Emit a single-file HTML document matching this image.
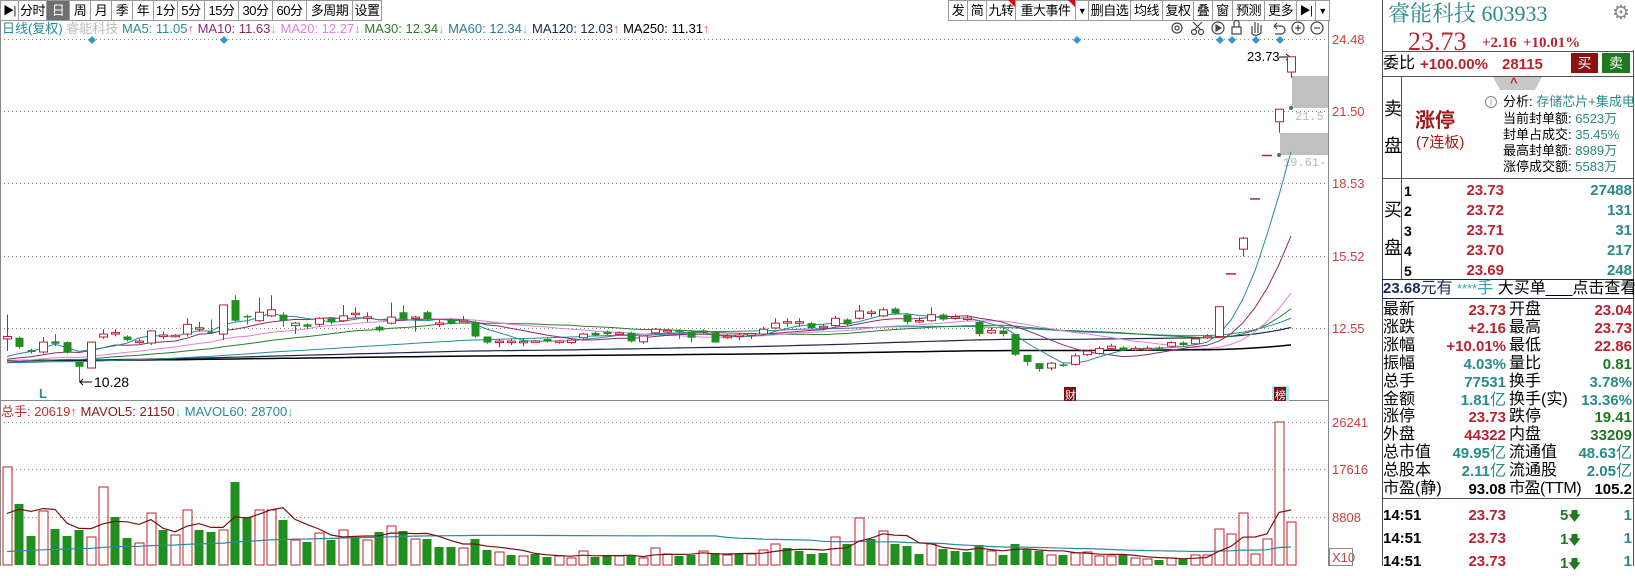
<!DOCTYPE html>
<html><head><meta charset="utf-8">
<style>
*{box-sizing:border-box}
body{margin:0;width:1635px;height:566px;position:relative;overflow:hidden;background:#fff;font-family:"Liberation Sans","Noto Sans CJK SC",sans-serif;color:#000}
.a{position:absolute;white-space:nowrap}
.tb{position:absolute;top:0;height:21px;font-size:13px;line-height:20px;text-align:center;border:1px solid #9a9a9a;border-left:none;background:#fff;white-space:nowrap;overflow:hidden;letter-spacing:-0.5px}
.rp .a{line-height:1}
.red{color:#b8232f}.teal{color:#2a8a8a}.grn{color:#1f7a1f}
</style></head><body>

<!-- left toolbar -->
<div class="tb" style="left:0;width:19px;border-left:1px solid #9a9a9a;font-size:11px">▶|</div>
<div class="tb" style="left:19px;width:28px">分时</div>
<div class="tb" style="left:47px;width:23px;background:#6f6f6f;color:#fff">日</div>
<div class="tb" style="left:70px;width:21px">周</div>
<div class="tb" style="left:91px;width:21px">月</div>
<div class="tb" style="left:112px;width:21px">季</div>
<div class="tb" style="left:133px;width:21px">年</div>
<div class="tb" style="left:154px;width:24px">1分</div>
<div class="tb" style="left:178px;width:27px">5分</div>
<div class="tb" style="left:205px;width:34px">15分</div>
<div class="tb" style="left:239px;width:34px">30分</div>
<div class="tb" style="left:273px;width:34px">60分</div>
<div class="tb" style="left:307px;width:46px">多周期</div>
<div class="tb" style="left:353px;width:29px">设置</div>

<!-- right toolbar -->
<div class="tb" style="left:948px;width:20px;border-left:1px solid #9a9a9a">发</div>
<div class="tb" style="left:968px;width:19px">简</div>
<div class="tb" style="left:987px;width:29px">九转</div>
<div class="tb" style="left:1016px;width:60px">重大事件</div>
<div class="tb" style="left:1076px;width:13px;font-size:9px">▼</div>
<div class="tb" style="left:1089px;width:42px">删自选</div>
<div class="tb" style="left:1131px;width:32px">均线</div>
<div class="tb" style="left:1163px;width:31px">复权</div>
<div class="tb" style="left:1194px;width:19px">叠</div>
<div class="tb" style="left:1213px;width:20px">窗</div>
<div class="tb" style="left:1233px;width:32px">预测</div>
<div class="tb" style="left:1265px;width:32px">更多</div>
<div class="tb" style="left:1297px;width:19px;font-size:11px">▶|</div>
<div class="tb" style="left:1316px;width:14px;font-size:9px">▼</div>
<div class="a" style="left:1008px;top:0;width:0;height:0;border-top:7px solid #d01010;border-left:7px solid transparent"></div>
<div class="a" style="left:1068px;top:0;width:0;height:0;border-top:7px solid #d01010;border-left:7px solid transparent"></div>

<!-- MA legend -->
<div class="a" style="left:2px;top:21px;font-size:13px;line-height:16px">
<span style="color:#2a8a9a">日线(复权)</span> <span style="color:#bbb">睿能科技</span> <span style="color:#2a8a9a">MA5: 11.05<span style="color:#e06060">↑</span></span> <span style="color:#8b2a6b">MA10: 11.63<span style="color:#5cc">↓</span></span> <span style="color:#e080e0">MA20: 12.27<span style="color:#5cc">↓</span></span> <span style="color:#2a7a2a">MA30: 12.34<span style="color:#5cc">↓</span></span> <span style="color:#2a7a9a">MA60: 12.34<span style="color:#5cc">↓</span></span> <span style="color:#1a2a4a">MA120: 12.03<span style="color:#e06060">↑</span></span> <span style="color:#000">MA250: 11.31<span style="color:#e06060">↑</span></span>
</div>

<svg id="c" class="a" style="left:0;top:0" width="1382" height="566" xmlns="http://www.w3.org/2000/svg">
<g fill="none" stroke="#444" stroke-width="1.2">
<circle cx="1177" cy="28" r="5"/><circle cx="1177" cy="28" r="2"/>
<circle cx="1194" cy="32" r="2.5"/><circle cx="1201" cy="32" r="2.5"/><path d="M1193 22 L1201 30 M1202 22 L1194 30"/>
<circle cx="1218" cy="28" r="6"/><path d="M1216 25 L1221 28 L1216 31Z" fill="#444"/>
<rect x="1232" y="27" width="9" height="7"/><path d="M1234 27 V23 a2.5 2.5 0 0 1 5 0 V27"/>
<path d="M1252 34 V26 M1255 33 V22 M1258 33 V23 M1261 33 V25 M1252 34 Q1256 37 1261 33"/>
<path d="M1274 26 h7 a4 4 0 0 1 0 8 h-6 M1274 26 l3 -3 M1274 26 l3 3"/>
<circle cx="1298" cy="28" r="6"/><path d="M1295 28 h6 M1298 25 v6"/>
<circle cx="1317" cy="28" r="6"/><path d="M1314 28 h6"/>
</g>
<line x1="0.5" y1="21" x2="0.5" y2="566" stroke="#888"/>
<line x1="1328.5" y1="21" x2="1328.5" y2="566" stroke="#888"/>
<line x1="0" y1="400.5" x2="1328" y2="400.5" stroke="#888"/>
<g stroke="#888" stroke-dasharray="1,3">
<line x1="0" y1="39.5" x2="1328" y2="39.5"/><line x1="0" y1="111.5" x2="1328" y2="111.5"/>
<line x1="0" y1="183.5" x2="1328" y2="183.5"/><line x1="0" y1="256.5" x2="1328" y2="256.5"/>
<line x1="0" y1="328.5" x2="1328" y2="328.5"/>
<line x1="0" y1="422.5" x2="1328" y2="422.5"/><line x1="0" y1="469.5" x2="1328" y2="469.5"/>
<line x1="0" y1="517.5" x2="1328" y2="517.5"/>
</g>
<g font-family="Liberation Sans" font-size="13" fill="#c84040">
<text x="1332" y="44">24.48</text><text x="1332" y="116">21.50</text><text x="1332" y="188">18.53</text>
<text x="1332" y="261">15.52</text><text x="1332" y="333">12.55</text>
<text x="1332" y="427">26241</text><text x="1332" y="474">17616</text><text x="1332" y="522">8808</text>
<text x="1332" y="562">X10</text>
</g>
<rect x="1329.5" y="548.5" width="23" height="17" fill="none" stroke="#888"/>
<g fill="#3399cc">
<path d="M92 36 l4 4 -4 4 -4 -4z"/><path d="M224 36 l4 4 -4 4 -4 -4z"/><path d="M1077 36 l4 4 -4 4 -4 -4z"/>
<path d="M1220 36 l4 4 -4 4 -4 -4z"/><path d="M1232 36 l4 4 -4 4 -4 -4z"/><path d="M1256 36 l4 4 -4 4 -4 -4z"/><path d="M1280 36 l4 4 -4 4 -4 -4z"/>
</g>
<rect x="1292" y="76" width="36" height="32" fill="#c0c0c0"/>
<rect x="1280" y="133" width="48" height="22" fill="#c0c0c0"/>
<circle cx="1291" cy="108" r="2" fill="#666"/><circle cx="1279" cy="155" r="2" fill="#666"/>
<text x="1295" y="120" font-family="Liberation Mono" font-size="12" fill="#bbb">21.5</text>
<text x="1283" y="166" font-family="Liberation Mono" font-size="12" fill="#bbb">19.61-</text>
<text x="1247" y="61" font-family="Liberation Sans" font-size="13" fill="#000">23.73</text>
<path d="M1279 57 H1290 M1286 54 L1290 57 L1286 60" stroke="#000" fill="none"/>
<path d="M80 382 H92 M83 379 L80 382 L83 385" stroke="#000" fill="none"/>
<text x="94" y="387" font-family="Liberation Sans" font-size="14" fill="#000">10.28</text>
<text x="39" y="398" font-family="Liberation Sans" font-size="13" font-weight="bold" fill="#2a8a9a">L</text>
<rect x="1064" y="387" width="12" height="14" fill="#7a1010"/>
<text x="1065" y="399" font-size="11" fill="#fff" font-family="Noto Sans CJK SC">财</text>
<rect x="1272" y="386" width="17" height="15" fill="#9ee8e8"/>
<rect x="1274" y="387" width="12" height="14" fill="#7a1010"/>
<text x="1275" y="399" font-size="11" fill="#fff" font-family="Noto Sans CJK SC">榜</text>
<text x="1" y="416" font-family="Liberation Sans,Noto Sans CJK SC" font-size="13"><tspan fill="#c03030">总手: 20619</tspan><tspan fill="#e06060">↑</tspan><tspan fill="#8b1a1a"> MAVOL5: 21150</tspan><tspan fill="#5cc">↓</tspan><tspan fill="#2a8a9a"> MAVOL60: 28700</tspan><tspan fill="#5cc">↓</tspan></text>
<g id="g"></g>
</svg>

<!-- right panel -->
<div class="rp">
<div class="a" style="left:1382px;top:0;width:1px;height:566px;background:#555"></div>
<div class="a" style="left:1633px;top:50px;width:1px;height:516px;background:#555"></div>
<div class="a" style="left:1388px;top:2px;font-family:'Liberation Serif','Noto Serif CJK SC',serif;font-size:22px;color:#2a8a8a;line-height:24px">睿能科技 603933</div>
<div class="a" style="left:1612px;top:3px;font-size:20px;color:#888;line-height:20px">⚙</div>
<div class="a" style="left:1408px;top:29px;font-family:'Liberation Serif',serif;font-size:26px;color:#b8232f;line-height:26px">23.73</div>
<div class="a" style="left:1482px;top:36px;font-family:'Liberation Serif',serif;font-size:15px;font-weight:bold;color:#b8232f;line-height:15px">+2.16</div>
<div class="a" style="left:1523px;top:36px;font-family:'Liberation Serif',serif;font-size:15px;font-weight:bold;color:#b8232f;line-height:15px">+10.01%</div>

<div class="a" style="left:1382px;top:51px;width:252px;height:1px;background:#555"></div>
<div class="a" style="left:1383px;top:56px;font-size:16px">委比</div>
<div class="a red" style="left:1420px;top:57px;font-size:15px;font-weight:bold">+100.00%</div>
<div class="a red" style="left:1502px;top:57px;font-size:15px;font-weight:bold">28115</div>
<div class="a" style="left:1571px;top:53px;width:27px;height:20px;background:#8b1010;color:#fff;font-size:14px;line-height:20px;text-align:center">买</div>
<div class="a" style="left:1602px;top:53px;width:28px;height:20px;background:#1e7a1e;color:#fff;font-size:14px;line-height:20px;text-align:center">卖</div>
<div class="a" style="left:1382px;top:76px;width:252px;height:1px;background:#555"></div>
<div class="a" style="left:1401px;top:76px;width:1px;height:203px;background:#555"></div>
<div class="a" style="left:1384px;top:100px;font-size:18px">卖</div>
<div class="a" style="left:1384px;top:137px;font-size:18px">盘</div>
<div class="a" style="left:1493px;top:77px;width:49px;height:0;border-top:13px solid #c8c8c8;border-left:7px solid transparent;border-right:7px solid transparent"></div>
<div class="a" style="left:1510px;top:76px;font-size:13px;color:#b8232f;font-weight:bold">^</div>
<div class="a" style="left:1415px;top:111px;font-size:20px;font-weight:bold;color:#a01818">涨停</div>
<div class="a" style="left:1416px;top:135px;font-size:15px;color:#a01818">(7连板)</div>
<div class="a" style="left:1485px;top:96px;width:12px;height:12px;border:1px solid #888;border-radius:50%;font-size:9px;text-align:center;line-height:10px;color:#888">i</div>
<div class="a" style="left:1503px;top:95px;font-size:13px;line-height:14px">分析: <span class="teal">存储芯片+集成电路</span></div>
<div class="a" style="left:1503px;top:112px;font-size:13px">当前封单额: <span class="teal">6523万</span></div>
<div class="a" style="left:1503px;top:128px;font-size:13px">封单占成交: <span class="teal">35.45%</span></div>
<div class="a" style="left:1503px;top:144px;font-size:13px">最高封单额: <span class="teal">8989万</span></div>
<div class="a" style="left:1503px;top:160px;font-size:13px">涨停成交额: <span class="teal">5583万</span></div>
<div class="a" style="left:1382px;top:178px;width:252px;height:1px;background:#555"></div>
<div class="a" style="left:1384px;top:201px;font-size:18px">买</div>
<div class="a" style="left:1384px;top:239px;font-size:18px">盘</div>

<div class="a" style="left:1404px;top:181px;font-size:14px;font-weight:bold;line-height:20px;white-space:normal">1<br>2<br>3<br>4<br>5</div>
<div class="a red" style="left:1440px;top:181px;width:64px;text-align:right;font-size:15px;font-weight:bold;line-height:20px;white-space:normal">23.73<br>23.72<br>23.71<br>23.70<br>23.69</div>
<div class="a teal" style="left:1560px;top:181px;width:72px;text-align:right;font-size:15px;font-weight:bold;line-height:20px;white-space:normal">27488<br>131<br>31<br>217<br>248</div>

<div class="a" style="left:1382px;top:279px;width:252px;height:20px;border:1px solid #1a2a5a"></div>
<div class="a" style="left:1383px;top:280px;font-size:16px;line-height:18px;color:#1a2a5a"><b style="font-size:15px">23.68</b>元有 <span style="color:#2aaaaa;font-size:13px">****</span><span style="color:#2aaaaa">手</span> <span style="color:#000">大买单</span><span style="color:#000">___点击查看</span></div>

<div class="a" style="left:1383px;top:301px;font-size:16px;line-height:17.9px;white-space:normal;width:70px">最新<br>涨跌<br>涨幅<br>振幅<br>总手<br>金额<br>涨停<br>外盘<br>总市值<br>总股本<br>市盈(静)</div>
<div class="a" style="left:1420px;top:302px;width:86px;text-align:right;font-size:15px;font-weight:bold;line-height:17.9px;white-space:normal"><span class="red">23.73</span><br><span class="red">+2.16</span><br><span class="red">+10.01%</span><br><span class="teal">4.03%</span><br><span class="teal">77531</span><br><span class="teal">1.81<span style="font-weight:normal;font-size:16px">亿</span></span><br><span class="red">23.73</span><br><span class="red">44322</span><br><span class="teal">49.95<span style="font-weight:normal;font-size:16px">亿</span></span><br><span class="teal">2.11<span style="font-weight:normal;font-size:16px">亿</span></span><br>93.08</div>
<div class="a" style="left:1509px;top:301px;font-size:16px;line-height:17.9px;width:80px">开盘<br>最高<br>最低<br>量比<br>换手<br>换手(实)<br>跌停<br>内盘<br>流通值<br>流通股<br><span style="letter-spacing:-0.5px">市盈(TTM)</span></div>
<div class="a" style="left:1560px;top:302px;width:72px;text-align:right;font-size:15px;font-weight:bold;line-height:17.9px;white-space:normal"><span class="red">23.04</span><br><span class="red">23.73</span><br><span class="red">22.86</span><br><span class="grn">0.81</span><br><span class="teal">3.78%</span><br><span class="teal">13.36%</span><br><span class="grn">19.41</span><br><span class="grn">33209</span><br><span class="teal">48.63<span style="font-weight:normal;font-size:16px">亿</span></span><br><span class="teal">2.05<span style="font-weight:normal;font-size:16px">亿</span></span><br>105.2</div>

<div class="a" style="left:1382px;top:498px;width:252px;height:1px;background:#555"></div>
<div class="a" style="left:1383px;top:504px;font-size:15px;font-weight:bold;line-height:23px;white-space:normal">14:51<br>14:51<br>14:51</div>
<div class="a red" style="left:1440px;top:504px;width:66px;text-align:right;font-size:15px;font-weight:bold;line-height:23px;white-space:normal">23.73<br>23.73<br>23.73</div>
<div class="a grn" style="left:1560px;top:504px;font-size:15px;font-weight:bold;line-height:23px;white-space:normal">5<span style="font-size:12px">🡇</span><br>1<span style="font-size:12px">🡇</span><br>1<span style="font-size:12px">🡇</span></div>
<div class="a teal" style="left:1600px;top:504px;width:32px;text-align:right;font-size:15px;font-weight:bold;line-height:23px;white-space:normal">1<br>1<br>1</div>
</div>

<script>
var D=[[12.1,12.2,13.1,11.6],[12.15,11.77,12.2,11.7],[11.64,11.56,11.7,11.5],[11.56,11.97,12.18,11.5],[12.0,11.9,12.3,11.8],[11.97,11.53,12.0,11.5],[11.15,10.95,11.15,10.3],[10.9,11.97,11.99,10.88],[12.18,12.3,12.5,12.1],[12.35,12.36,12.5,12.2],
[12.2,12.06,12.25,12.0],[12.0,12.01,12.1,11.9],[11.93,12.43,12.45,11.85],[12.25,12.26,12.4,12.1],[12.2,12.25,12.3,12.15],[12.3,12.7,12.95,12.2],[12.55,12.56,12.8,12.4],[12.4,12.35,12.9,12.3],[12.3,13.5,13.5,12.05],[13.7,12.85,13.9,12.8],
[13.05,13.0,13.1,12.7],[12.85,13.2,13.8,12.8],[13.05,13.3,13.9,13.0],[13.1,12.85,13.2,12.6],[12.65,12.75,12.8,12.3],[12.7,12.6,12.75,12.5],[12.7,12.95,13.0,12.6],[12.95,12.8,13.0,12.7],[12.85,13.05,13.5,12.8],[13.15,13.16,13.4,13.0],
[13.0,13.01,13.2,12.8],[12.6,12.45,12.65,12.4],[12.75,13.0,13.6,12.7],[13.2,12.9,13.5,12.85],[12.95,13.0,13.05,12.4],[13.2,12.9,13.25,12.85],[12.75,12.76,12.9,12.6],[12.9,12.75,12.95,12.7],[12.85,12.87,13.05,12.8],[12.8,12.2,12.85,12.15],
[12.2,11.95,12.2,11.9],[12.0,12.01,12.1,11.75],[12.0,12.01,12.1,11.85],[12.0,12.0,12.1,11.8],[12.0,12.02,12.05,11.95],[12.1,12.0,12.12,11.95],[12.0,12.02,12.05,11.9],[11.95,12.05,12.1,11.9],[12.15,12.3,12.35,12.1],[12.35,12.25,12.4,12.2],
[12.4,12.3,12.45,12.25],[12.3,12.35,12.4,12.25],[12.35,12.0,12.4,11.95],[11.98,12.22,12.25,11.9],[12.35,12.5,12.55,12.3],[12.4,12.45,12.5,12.35],[12.45,12.4,12.5,12.1],[12.4,12.15,12.45,11.95],[12.45,12.35,12.5,12.3],[12.35,11.95,12.4,11.95],
[12.2,12.21,12.3,12.1],[12.25,12.26,12.35,12.05],[12.25,12.32,12.35,12.1],[12.3,12.5,12.6,12.25],[12.55,12.75,12.95,12.5],[12.8,12.81,12.95,12.6],[12.8,12.81,12.95,12.6],[12.75,12.55,12.8,12.5],[12.6,12.62,12.7,12.45],[12.65,12.95,13.05,12.6],
[12.9,12.7,12.95,12.65],[12.95,13.25,13.5,12.9],[13.2,13.21,13.3,13.0],[13.05,13.3,13.4,13.0],[13.35,13.15,13.4,13.1],[13.1,12.8,13.15,12.7],[12.85,12.86,13.0,12.75],[12.85,13.1,13.4,12.8],[13.1,12.9,13.15,12.85],[13.0,13.01,13.1,12.9],
[12.95,12.96,13.05,12.85],[12.8,12.3,12.85,12.2],[12.35,12.45,12.55,12.3],[12.45,12.3,12.55,12.2],[12.3,11.45,12.3,11.4],[11.44,11.15,11.45,11.0],[11.1,10.86,11.1,10.75],[10.9,11.1,11.15,10.8],[11.05,11.0,11.1,10.95],[11.05,11.4,11.5,11.0],
[11.45,11.6,11.65,11.4],[11.5,11.7,11.8,11.45],[11.7,11.8,11.9,11.65],[11.75,11.65,11.8,11.6],[11.7,11.71,11.8,11.6],[11.7,11.71,11.8,11.6],[11.75,11.7,11.8,11.65],[11.8,11.95,12.0,11.75],[11.95,11.85,12.0,11.8],[11.9,12.1,12.15,11.85],
[12.2,12.21,12.3,12.1],[12.2,13.43,13.43,12.15],[14.78,14.78,14.78,14.78],[15.8,16.25,16.3,15.5],[17.87,17.87,17.87,17.87],[19.66,19.66,19.66,19.66],[21.05,21.57,21.57,20.6],[23.1,23.73,23.73,22.86]];
var V=[98,61,29,54,36,29,35,28,78,48,27,22,52,35,30,55,35,33,35,83,48,55,55,45,25,23,32,25,35,28,25,33,39,34,26,26,18,18,17,26,15,13,10,9,11,8,9,7,14,8,9,9,9,7,17,11,9,10,14,12,10,11,11,15,21,17,14,11,12,28,21,47,26,34,21,19,11,21,16,14,13,20,14,10,21,16,14,10,10,12,13,9,9,10,7,6,5,7,6,10,10,36,31,52,11,26,143,43];
var VC="rggrgggrrg"+"grrgrrggrg"+"grrgrgrgrg"+"rgrgrgggrg"+"grgrggrrrg"+"grgrrrggrg"+"rgrrrggggr"+"grgrgggrgg"+"ggrggggrgr"+"rrrgrrgrgr"+"rrrrrrrr";
var R="#b8232f",G="#1f8f1f",s="";
function Y(p){return 328-(p-12.55)*24.26}
function X(i){return 7+12*i}
var cl=[];for(var k=0;k<250;k++)cl.push(11.2+0.15*Math.sin(k/20));
D.forEach(function(d){cl.push(d[1])});
function ma(n,col,w){var p="";for(var i=0;i<D.length;i++){var j=i+250,t=0;for(var m=0;m<n;m++)t+=cl[j-m];p+=(i?"L":"M")+X(i)+" "+Y(t/n).toFixed(1)+" ";}
s+='<path d="'+p+'" fill="none" stroke="'+col+'" stroke-width="'+(w||1)+'"/>';}
ma(250,"#000",1.5);ma(120,"#1a2a4a",1.2);ma(60,"#2a8a9a");ma(30,"#2a7a2a");ma(20,"#e080e0");ma(10,"#8b2a6b");ma(5,"#2a8a9a");
D.forEach(function(d,i){var x=X(i),o=d[0],c=d[1],h=d[2],l=d[3];
 if(o==c&&h==l){s+='<line x1="'+(x-5)+'" x2="'+(x+5)+'" y1="'+Y(o)+'" y2="'+Y(o)+'" stroke="'+R+'" stroke-width="1.5"/>';return;}
 var up=c>=o,col=up?R:G,t=Y(Math.max(o,c)),b=Y(Math.min(o,c));if(b-t<1.5){b=t+1.5}
 s+='<line x1="'+x+'.5" x2="'+x+'.5" y1="'+Y(h)+'" y2="'+Y(l)+'" stroke="'+col+'"/>';
 if(up)s+='<rect x="'+(x-3.5)+'" y="'+t+'" width="8" height="'+(b-t)+'" fill="#fff" stroke="'+col+'"/>';
 else s+='<rect x="'+(x-3.5)+'" y="'+t+'" width="8" height="'+(b-t)+'" fill="'+col+'"/>';
});
V.forEach(function(h,i){var x=X(i);if(VC[i]=="r")s+='<rect x="'+(x-4)+'" y="'+(565-h)+'" width="9" height="'+h+'" fill="#fff" stroke="'+R+'"/>';
 else s+='<rect x="'+(x-4.5)+'" y="'+(565-h)+'" width="9" height="'+h+'" fill="'+G+'"/>';});
function mv(n,col,pad){var a=[];for(var k=0;k<n;k++)a.push(pad);a=a.concat(V);var p="";for(var i=0;i<V.length;i++){var t=0;for(var m=0;m<n;m++)t+=a[i+n-m];p+=(i?"L":"M")+X(i)+" "+(565-t/n).toFixed(1)+" ";}
s+='<path d="'+p+'" fill="none" stroke="'+col+'" stroke-width="1.2"/>';}
mv(60,"#2a8a9a",12);mv(5,"#7a1010",40);
document.getElementById("g").innerHTML=s;
</script>
</body></html>
